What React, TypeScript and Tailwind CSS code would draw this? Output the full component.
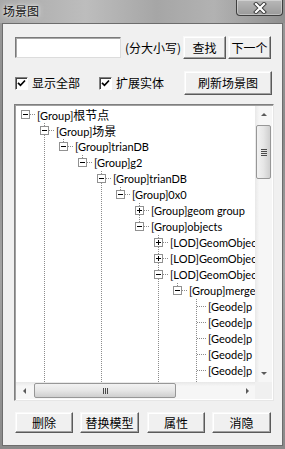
import React from 'react';

type Row = { l: number; t: string; box: '+' | '-' | null; next: boolean };

const rows: Row[] = [
  { l: 0, t: '[Group]根节点', box: '-', next: false },
  { l: 1, t: '[Group]场景', box: '-', next: true },
  { l: 2, t: '[Group]trianDB', box: '-', next: false },
  { l: 3, t: '[Group]g2', box: '-', next: false },
  { l: 4, t: '[Group]trianDB', box: '-', next: true },
  { l: 5, t: '[Group]0x0', box: '-', next: false },
  { l: 6, t: '[Group]geom group', box: '+', next: true },
  { l: 6, t: '[Group]objects', box: '-', next: false },
  { l: 7, t: '[LOD]GeomObjec', box: '+', next: true },
  { l: 7, t: '[LOD]GeomObjec', box: '+', next: true },
  { l: 7, t: '[LOD]GeomObjec', box: '-', next: true },
  { l: 8, t: '[Group]merge', box: '-', next: false },
  { l: 9, t: '[Geode]p', box: null, next: true },
  { l: 9, t: '[Geode]p', box: null, next: true },
  { l: 9, t: '[Geode]p', box: null, next: true },
  { l: 9, t: '[Geode]p', box: null, next: true },
  { l: 9, t: '[Geode]p', box: null, next: true },
  { l: 9, t: '', box: null, next: true },
];

const LINE = '#8c8c8c';

function Cell({ top, bottom, conn, box }: { top?: boolean; bottom?: boolean; conn?: boolean; box?: '+' | '-' | null }) {
  return (
    <svg width="19" height="16" className="block shrink-0" shapeRendering="crispEdges">
      {top && <line x1="9.5" y1="0" x2="9.5" y2="8" stroke={LINE} strokeDasharray="1 1" />}
      {bottom && <line x1="9.5" y1="8" x2="9.5" y2="16" stroke={LINE} strokeDasharray="1 1" />}
      {conn && <line x1="10" y1="7.5" x2="19" y2="7.5" stroke={LINE} strokeDasharray="1 1" />}
      {box && (
        <g>
          <rect x="5.5" y="3.5" width="8" height="8" fill="#fff" stroke="#919191" />
          <line x1="7" y1="7.5" x2="12" y2="7.5" stroke="#000" />
          {box === '+' && <line x1="9.5" y1="5" x2="9.5" y2="10" stroke="#000" />}
        </g>
      )}
    </svg>
  );
}

function Label({ t }: { t: string }) {
  const parts = t.split(/([\u4e00-\u9fff]+)/).filter((p) => p.length > 0);
  return (
    <span className="ml-[2px] whitespace-nowrap leading-[16px] h-[16px] text-[11px] [font-family:Lato,'Noto_Sans_CJK_SC',sans-serif]">
      {parts.map((p, i) =>
        /[\u4e00-\u9fff]/.test(p) ? (
          <span key={i} className="text-[12px] leading-[16px] [font-family:'Noto_Sans_CJK_SC',sans-serif]">
            {p}
          </span>
        ) : (
          <span key={i}>{p}</span>
        )
      )}
    </span>
  );
}

function TreeRow({ row, idx }: { row: Row; idx: number }) {
  const cells: React.ReactNode[] = [];
  for (let k = 0; k < row.l; k++) {
    let cont = false;
    for (let j = idx - 1; j >= 0; j--) {
      if (rows[j].l === k) {
        cont = rows[j].next;
        break;
      }
    }
    cells.push(<Cell key={k} top={cont} bottom={cont} />);
  }
  cells.push(<Cell key="c" top={idx !== 0} bottom={row.next} conn box={row.box} />);
  return (
    <div className="flex h-[16px] items-center overflow-hidden">
      {cells}
      {row.t && <Label t={row.t} />}
    </div>
  );
}

const btn =
  'flex items-center justify-center bg-[#f0f0f0] border border-t-[#f8f8f8] border-l-[#f8f8f8] border-r-[#5a5a5a] border-b-[#5a5a5a] shadow-[inset_-1px_-1px_0_#a0a0a0,inset_1px_1px_0_#ffffff] text-[12px] leading-none';

function Check() {
  return (
    <div className="w-[13px] h-[13px] bg-white border border-t-[#808080] border-l-[#808080] border-r-[#fff] border-b-[#fff] shadow-[inset_1px_1px_0_#404040] flex items-center justify-center shrink-0">
      <svg width="9" height="9" viewBox="0 0 9 9">
        <path d="M1 3.8 L3.5 6.3 L8 1.5" stroke="#000" strokeWidth="1.7" fill="none" />
      </svg>
    </div>
  );
}

function Arrow({ dir }: { dir: 'up' | 'down' | 'left' | 'right' }) {
  const p =
    dir === 'up'
      ? 'M1 5 L4 2 L7 5 Z'
      : dir === 'down'
      ? 'M1 2 L4 5 L7 2 Z'
      : dir === 'left'
      ? 'M5 1 L2 4 L5 7 Z'
      : 'M3 1 L6 4 L3 7 Z';
  return (
    <svg width="8" height="8" viewBox="0 0 8 8">
      <path d={p} fill="#5a5a5a" />
    </svg>
  );
}

export default function App() {
  return (
    <div className="w-[285px] h-[449px] flex flex-col overflow-hidden [font-family:'Noto_Sans_CJK_SC',sans-serif] text-[12px] text-black bg-[linear-gradient(180deg,#9a9a9a,#8a8a8a_30%,#a3a3a3_60%,#8a8a8a)]">
      {/* title bar */}
      <div className="h-[23px] flex shrink-0 bg-[linear-gradient(90deg,#a9a9a9,#bdbdbd_30%,#a6a6a6_55%,#b2b2b2_75%,#8f8f8f)]">
        <div className="ml-[3px] mt-[2px] text-[12px] leading-[18px] text-[#111] [text-shadow:0_0_6px_#eeeeee,0_0_3px_#eeeeee]">
          场景图
        </div>
        <div className="ml-auto mr-[2px] w-[47px] h-[16px] rounded-b-[4px] border border-t-0 border-[#3f3f3f] bg-[linear-gradient(180deg,#b8b8b8,#9a9a9a)] shadow-[inset_0_0_0_1px_rgba(255,255,255,0.35)] flex items-center justify-center">
          <svg width="14" height="12" viewBox="0 0 14 12">
            <path d="M3 2 L11 10 M11 2 L3 10" stroke="#3a3a3a" strokeWidth="4" strokeLinecap="square" />
            <path d="M3 2 L11 10 M11 2 L3 10" stroke="#ffffff" strokeWidth="2.2" strokeLinecap="square" />
          </svg>
        </div>
      </div>

      {/* client */}
      <div className="mx-[2px] mb-[3px] flex-1 bg-[#f0f0f0] border border-[#6d6d6d] flex flex-col">
        {/* search row */}
        <div className="mt-[12px] h-[23px] flex items-center pl-[12px]">
          <div className="w-[106px] h-[21px] bg-white border border-t-[#7a7a7a] border-l-[#7a7a7a] border-r-[#dcdcdc] border-b-[#dcdcdc] shadow-[inset_1px_1px_0_#a8a8a8]" />
          <span className="ml-[4px] w-[58px] whitespace-nowrap">(分大小写)</span>
          <div className={btn + ' w-[43px] h-[23px]'}>查找</div>
          <div className={btn + ' ml-[2px] w-[43px] h-[23px]'}>下一个</div>
        </div>

        {/* checkbox row */}
        <div className="mt-[12px] h-[24px] flex items-center pl-[12px] pr-[10px]">
          <Check />
          <span className="ml-[4px] whitespace-nowrap">显示全部</span>
          <div className="ml-[19px]">
            <Check />
          </div>
          <span className="ml-[4px] whitespace-nowrap">扩展实体</span>
          <div className={btn + ' ml-auto w-[88px] h-[24px]'}>刷新场景图</div>
        </div>

        {/* tree */}
        <div className="mt-[9px] ml-[11px] w-[260px] h-[297px] bg-white border border-t-[#7f7f7f] border-l-[#7f7f7f] border-r-[#e6e6e6] border-b-[#e6e6e6] shadow-[inset_1px_1px_0_#a0a0a0] p-[1px] flex flex-col">
          <div className="flex flex-1 min-h-0">
            <div className="flex-1 min-w-0 overflow-hidden pt-[1px]">
              {rows.map((r, i) => (
                <TreeRow key={i} row={r} idx={i} />
              ))}
            </div>
            {/* vertical scrollbar */}
            <div className="w-[17px] flex flex-col bg-[linear-gradient(90deg,#e8e8e8,#f6f6f6_25%,#f6f6f6)]">
              <div className="h-[17px] flex items-center justify-center">
                <Arrow dir="up" />
              </div>
              <div className="flex-1 flex flex-col">
                <div className="mt-[2px] mx-[1px] h-[54px] rounded-[2px] border border-[#979797] bg-[linear-gradient(90deg,#f2f2f2,#e6e6e6_50%,#cfcfcf)] flex flex-col items-center justify-center gap-[1px]">
                  <div className="w-[6px] h-[1px] bg-[#4a4a4a]" />
                  <div className="w-[6px] h-[1px] bg-[#4a4a4a]" />
                  <div className="w-[6px] h-[1px] bg-[#4a4a4a]" />
                  <div className="w-[6px] h-[1px] bg-[#4a4a4a]" />
                </div>
              </div>
              <div className="h-[17px] flex items-center justify-center">
                <Arrow dir="down" />
              </div>
            </div>
          </div>
          {/* horizontal scrollbar */}
          <div className="h-[17px] flex shrink-0">
            <div className="flex-1 flex bg-[linear-gradient(180deg,#e8e8e8,#f6f6f6_25%,#f6f6f6)]">
              <div className="w-[17px] flex items-center justify-center">
                <Arrow dir="left" />
              </div>
              <div className="ml-[1px] my-[1px] w-[142px] rounded-[2px] border border-[#979797] bg-[linear-gradient(180deg,#f2f2f2,#e6e6e6_50%,#cfcfcf)] flex items-center justify-center gap-[1px]">
                <div className="w-[1px] h-[6px] bg-[#4a4a4a]" />
                <div className="w-[1px] h-[6px] bg-[#4a4a4a]" />
                <div className="w-[1px] h-[6px] bg-[#4a4a4a]" />
              </div>
              <div className="flex-1" />
              <div className="w-[17px] flex items-center justify-center">
                <Arrow dir="right" />
              </div>
            </div>
            <div className="w-[17px] bg-[#f0f0f0]" />
          </div>
        </div>

        {/* bottom buttons */}
        <div className="mt-[11px] flex pl-[12px]">
          <div className={btn + ' w-[58px] h-[21px]'}>删除</div>
          <div className={btn + ' ml-[7px] w-[59px] h-[21px]'}>替换模型</div>
          <div className={btn + ' ml-[8px] w-[58px] h-[21px]'}>属性</div>
          <div className={btn + ' ml-[7px] w-[59px] h-[21px]'}>消隐</div>
        </div>
      </div>
    </div>
  );
}
